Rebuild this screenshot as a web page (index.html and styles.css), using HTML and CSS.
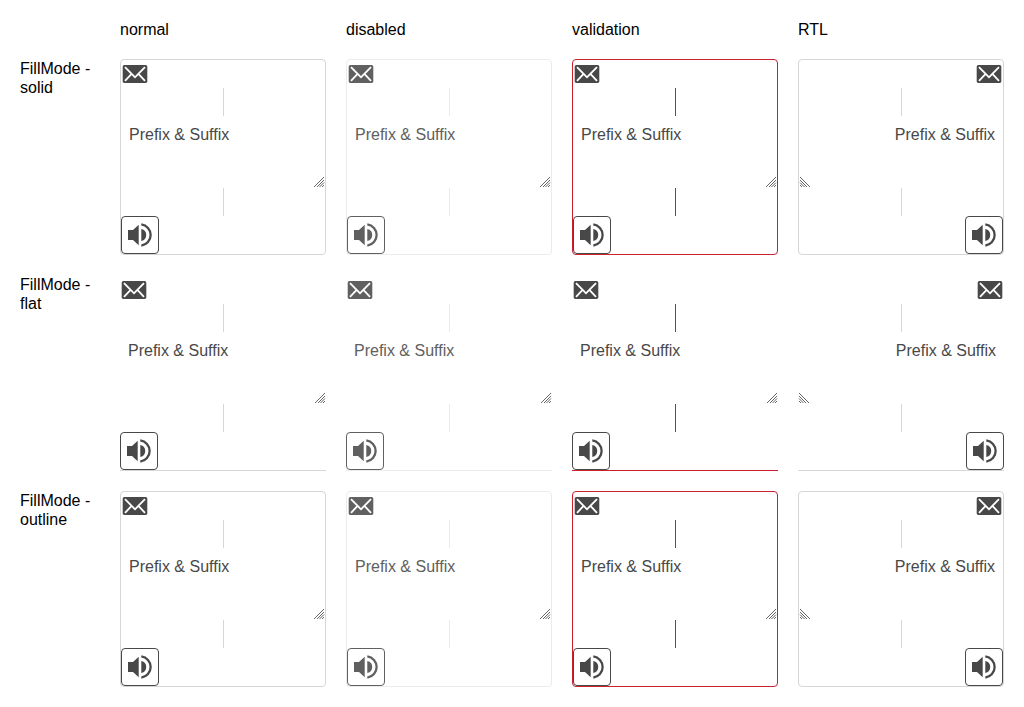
FILE: index.html
```html
<!DOCTYPE html>
<html lang="en">
<head>
<meta charset="utf-8">
<title>TextArea adornments</title>
<link rel="stylesheet" href="styles.css">
</head>
<body>
<svg class="sprite" aria-hidden="true">
  <symbol id="envelope" viewBox="0 0 28 28">
    <rect x="1.7" y="5.1" width="24.6" height="17.8" rx="1.6" fill="currentColor"/>
    <path d="M4 7.2 11.4 14.7 14 17.3 16.6 14.7 24 7.2M4 20.8 10.6 13.9M24 20.8 17.4 13.9" fill="none" stroke="#fff" stroke-width="1.8"/>
  </symbol>
  <symbol id="volume" viewBox="0 0 28 28">
    <path d="M2 9H7L12.7 3.8V24.2L7 19H2Z" fill="currentColor"/>
    <path d="M15.3 8.1A6 6 0 0 1 15.3 19.9Z" fill="currentColor"/>
    <path d="M15.3 3.3A10.8 10.8 0 0 1 15.3 24.7" fill="none" stroke="currentColor" stroke-width="2.3"/>
  </symbol>
</svg>
<main class="grid">
  <span></span><span>normal</span><span>disabled</span><span>validation</span><span>RTL</span>

  <span>FillMode - solid</span>
  <div class="field">
    <svg class="icon"><use href="#envelope"/></svg><span class="separator"></span>
    <textarea class="input" aria-label="Solid normal">Prefix &amp; Suffix</textarea>
    <span class="separator"></span><button class="button" type="button" aria-label="Volume"><svg class="icon"><use href="#volume"/></svg></button>
  </div>
  <div class="field disabled">
    <svg class="icon"><use href="#envelope"/></svg><span class="separator"></span>
    <textarea class="input" aria-label="Solid disabled" disabled>Prefix &amp; Suffix</textarea>
    <span class="separator"></span><button class="button" type="button" aria-label="Volume" disabled><svg class="icon"><use href="#volume"/></svg></button>
  </div>
  <div class="field invalid">
    <svg class="icon"><use href="#envelope"/></svg><span class="separator"></span>
    <textarea class="input" aria-label="Solid validation" aria-invalid="true">Prefix &amp; Suffix</textarea>
    <span class="separator"></span><button class="button" type="button" aria-label="Volume"><svg class="icon"><use href="#volume"/></svg></button>
  </div>
  <div class="field" dir="rtl">
    <svg class="icon"><use href="#envelope"/></svg><span class="separator"></span>
    <textarea class="input" aria-label="Solid RTL">Prefix &amp; Suffix</textarea>
    <span class="separator"></span><button class="button" type="button" aria-label="Volume"><svg class="icon"><use href="#volume"/></svg></button>
  </div>

  <span>FillMode - flat</span>
  <div class="field flat">
    <svg class="icon"><use href="#envelope"/></svg><span class="separator"></span>
    <textarea class="input" aria-label="Flat normal">Prefix &amp; Suffix</textarea>
    <span class="separator"></span><button class="button" type="button" aria-label="Volume"><svg class="icon"><use href="#volume"/></svg></button>
  </div>
  <div class="field flat disabled">
    <svg class="icon"><use href="#envelope"/></svg><span class="separator"></span>
    <textarea class="input" aria-label="Flat disabled" disabled>Prefix &amp; Suffix</textarea>
    <span class="separator"></span><button class="button" type="button" aria-label="Volume" disabled><svg class="icon"><use href="#volume"/></svg></button>
  </div>
  <div class="field flat invalid">
    <svg class="icon"><use href="#envelope"/></svg><span class="separator"></span>
    <textarea class="input" aria-label="Flat validation" aria-invalid="true">Prefix &amp; Suffix</textarea>
    <span class="separator"></span><button class="button" type="button" aria-label="Volume"><svg class="icon"><use href="#volume"/></svg></button>
  </div>
  <div class="field flat" dir="rtl">
    <svg class="icon"><use href="#envelope"/></svg><span class="separator"></span>
    <textarea class="input" aria-label="Flat RTL">Prefix &amp; Suffix</textarea>
    <span class="separator"></span><button class="button" type="button" aria-label="Volume"><svg class="icon"><use href="#volume"/></svg></button>
  </div>

  <span>FillMode - outline</span>
  <div class="field">
    <svg class="icon"><use href="#envelope"/></svg><span class="separator"></span>
    <textarea class="input" aria-label="Outline normal">Prefix &amp; Suffix</textarea>
    <span class="separator"></span><button class="button" type="button" aria-label="Volume"><svg class="icon"><use href="#volume"/></svg></button>
  </div>
  <div class="field disabled">
    <svg class="icon"><use href="#envelope"/></svg><span class="separator"></span>
    <textarea class="input" aria-label="Outline disabled" disabled>Prefix &amp; Suffix</textarea>
    <span class="separator"></span><button class="button" type="button" aria-label="Volume" disabled><svg class="icon"><use href="#volume"/></svg></button>
  </div>
  <div class="field invalid">
    <svg class="icon"><use href="#envelope"/></svg><span class="separator"></span>
    <textarea class="input" aria-label="Outline validation" aria-invalid="true">Prefix &amp; Suffix</textarea>
    <span class="separator"></span><button class="button" type="button" aria-label="Volume"><svg class="icon"><use href="#volume"/></svg></button>
  </div>
  <div class="field" dir="rtl">
    <svg class="icon"><use href="#envelope"/></svg><span class="separator"></span>
    <textarea class="input" aria-label="Outline RTL">Prefix &amp; Suffix</textarea>
    <span class="separator"></span><button class="button" type="button" aria-label="Volume"><svg class="icon"><use href="#volume"/></svg></button>
  </div>
</main>
</body>
</html>
```
FILE: styles.css
```css
* {
  box-sizing: border-box;
}

body {
  margin: 0;
  background: #fff;
  color: #000;
  font: 16px/19px "Liberation Sans", Arial, sans-serif;
}

.sprite {
  position: absolute;
  width: 0;
  height: 0;
}

.grid {
  display: grid;
  grid-template-columns: 80px repeat(4, minmax(0, 1fr));
  gap: 20px;
  padding: 20px;
}

.field {
  --ink: #484848;
  --line: #d6d6d6;
  display: flex;
  flex-direction: column;
  align-items: flex-start;
  border: 1px solid var(--line);
  border-radius: 4px;
  color: var(--ink);
}

.flat {
  border-width: 1px 0;
  border-top-color: transparent;
  border-radius: 0;
}

.disabled {
  --ink: #606060;
  --line: #ebebeb;
}

.invalid {
  --line: #ca2030;
}

.icon {
  display: block;
  flex: none;
  width: 28px;
  height: 28px;
}

.separator {
  align-self: center;
  width: 1px;
  height: 28px;
  background: var(--line);
}

.input {
  display: block;
  width: 100%;
  height: 72px;
  margin: 0;
  padding: 8px;
  border: 0;
  outline: 0;
  background: transparent;
  color: inherit;
  font: inherit;
  line-height: 22px;
  resize: vertical;
}

.input::-webkit-resizer {
  background: url("data:image/svg+xml,%3Csvg xmlns='http://www.w3.org/2000/svg' width='15' height='15'%3E%3Cpath d='M4 14 14 4M7 14 14 7M9.5 14 14 9.5M12 14 14 12' stroke='%23666'/%3E%3C/svg%3E") right bottom no-repeat;
}

[dir="rtl"] .input::-webkit-resizer {
  background: url("data:image/svg+xml,%3Csvg xmlns='http://www.w3.org/2000/svg' width='15' height='15'%3E%3Cpath d='M11 14 1 4M8 14 1 7M5.5 14 1 9.5M3 14 1 12' stroke='%23666'/%3E%3C/svg%3E") left bottom no-repeat;
}

.button {
  padding: 4px;
  border: 1px solid var(--ink);
  border-radius: 4px;
  background: #fff;
  color: var(--ink);
}
```
